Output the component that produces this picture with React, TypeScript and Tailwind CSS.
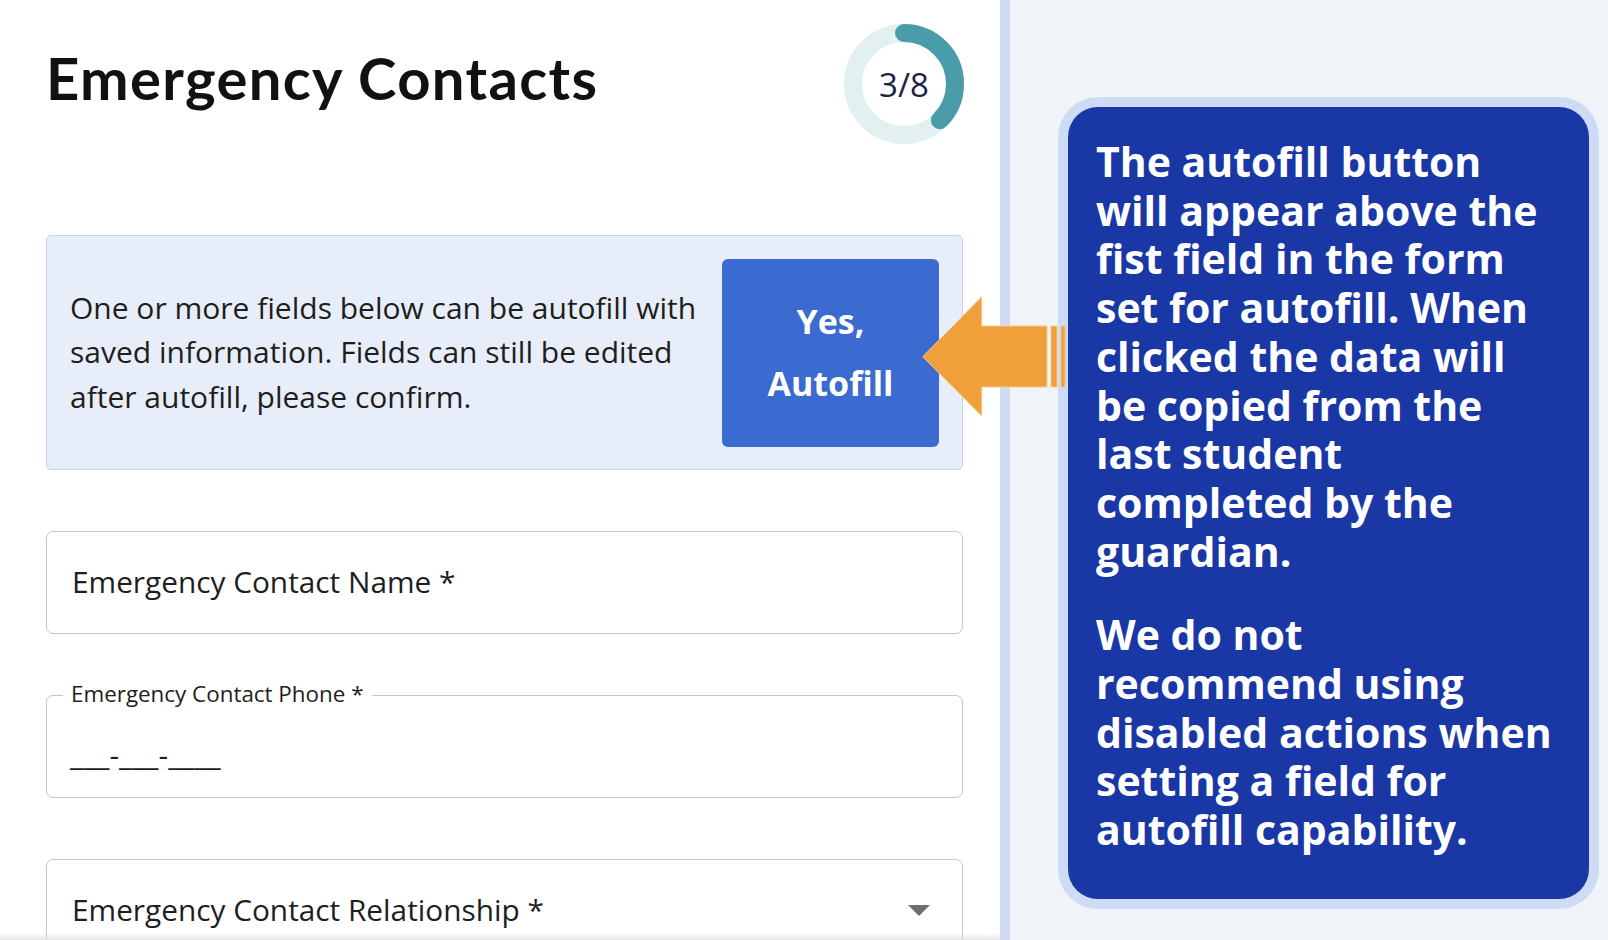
import React from "react";

const sans = { fontFamily: '"Open Sans", "Noto Sans", sans-serif' };

function ProgressRing() {
  const r = 51;
  const c = 2 * Math.PI * r;
  const p = (3 / 8) * c;
  return (
    <div className="relative h-[120px] w-[120px] shrink-0">
      <svg width="120" height="120" viewBox="0 0 120 120" className="absolute inset-0">
        <circle cx="60" cy="60" r={r} fill="none" stroke="#e3f0f2" strokeWidth="18" />
        <circle
          cx="60"
          cy="60"
          r={r}
          fill="none"
          stroke="#4a9da8"
          strokeWidth="18"
          strokeLinecap="round"
          strokeDasharray={`${p} ${c}`}
          transform="rotate(-90 60 60)"
        />
      </svg>
      <div className="absolute inset-0 flex items-center justify-center pt-[1px] text-[33px] leading-none text-[#1b2342] font-['Open_Sans',sans-serif]">
        3/8
      </div>
    </div>
  );
}

export default function App() {
  return (
    <div className="relative flex h-[940px] w-[1608px] overflow-hidden bg-white">
      {/* Left form panel */}
      <div className="relative h-[940px] w-[1000px] shrink-0 overflow-hidden bg-white pl-[46px] pr-[37px] pt-[24px] text-[#222]">
        <div className="flex items-start justify-between">
          <h1 className="mt-[25px] text-[58px] font-bold leading-[57px] tracking-[1.35px] text-[#111] font-['Lato',sans-serif]">
            Emergency Contacts
          </h1>
          <div className="mr-[-1px]">
            <ProgressRing />
          </div>
        </div>

        <div className="mt-[91px] flex h-[235px] items-center justify-between rounded-[5px] border-[1.5px] border-[#c6d3ee] bg-[#e8eef9] pl-[23px] pr-[23px] font-['Open_Sans',sans-serif]">
          <p className="whitespace-nowrap text-[30px] leading-[44.6px] text-[#1e1e1e]">
            One or more fields below can be autofill with
            <br />
            saved information. Fields can still be edited
            <br />
            after autofill, please confirm.
          </p>
          <button className="flex h-[188px] w-[217px] shrink-0 items-center justify-center rounded-[6px] bg-[#3b6ad0] text-center text-[34px] font-bold leading-[61.5px] text-white">
            <span>
              Yes,
              <br />
              Autofill
            </span>
          </button>
        </div>

        <div className="mt-[61px] flex h-[103px] items-center rounded-[7px] border-[1.5px] border-[#c6c6c6] pl-[25px] font-['Open_Sans',sans-serif] text-[29.8px] text-[#1e1e1e]">
          Emergency Contact Name *
        </div>

        <div className="relative mt-[61px] flex h-[103px] items-center rounded-[7px] border-[1.5px] border-[#c6c6c6] pl-[23px] pt-[15px] font-['Open_Sans',sans-serif] text-[#1e1e1e]">
          <span className="absolute left-[16px] top-[-2px] -translate-y-1/2 bg-white px-[8px] text-[22.4px] leading-none">
            Emergency Contact Phone *
          </span>
          <span className="text-[30px]">___-___-____</span>
        </div>

        <div className="mt-[61px] flex h-[103px] items-center justify-between rounded-[7px] border-[1.5px] border-[#c6c6c6] pl-[25px] pr-[32px] font-['Open_Sans',sans-serif] text-[29.8px] text-[#1e1e1e]">
          <span>Emergency Contact Relationship *</span>
          <svg width="22" height="11" viewBox="0 0 22 11">
            <polygon points="0,0 22,0 11,11" fill="#6e6e6e" />
          </svg>
        </div>

        <div className="pointer-events-none absolute bottom-0 left-0 right-0 h-[7px] bg-gradient-to-b from-transparent to-[#e4e4e4]" />
      </div>

      {/* Divider */}
      <div className="h-[940px] w-[10px] shrink-0 bg-[#cfdcf4]" />

      {/* Right annotation panel */}
      <div className="h-[940px] flex-1 bg-[#f0f3f8] pl-[48px] pt-[97px]">
        <div className="h-[812px] w-[541px] rounded-[40px] bg-[#cedbf5] p-[10px]">
          <div className="h-full w-full rounded-[30px] bg-[#1937a5] pl-[28px] pt-[30px] text-[41px] font-bold leading-[48.7px] text-white" style={sans}>
            <p className="whitespace-nowrap">
              The autofill button
              <br />
              will appear above the
              <br />
              fist field in the form
              <br />
              set for autofill. When
              <br />
              clicked the data will
              <br />
              be copied from the
              <br />
              last student
              <br />
              completed by the
              <br />
              guardian.
            </p>
            <p className="mt-[35px] whitespace-nowrap">
              We do not
              <br />
              recommend using
              <br />
              disabled actions when
              <br />
              setting a field for
              <br />
              autofill capability.
            </p>
          </div>
        </div>
      </div>

      {/* Orange pointer arrow overlay */}
      <svg
        className="pointer-events-none absolute left-[918px] top-[292px]"
        width="152"
        height="128"
        viewBox="918 292 152 128"
      >
        <polygon
          points="922.7,356.7 981.7,296.7 981.7,326 1047,326 1047,387 981.7,387 981.7,416"
          fill="#f0a03a"
          stroke="#f6c98c"
          strokeWidth="1"
        />
        <rect x="1051" y="326" width="6" height="61" fill="#f0a03a" stroke="#f6c98c" strokeWidth="0.8" />
        <rect x="1061" y="326" width="4" height="61" fill="#f0a03a" stroke="#f6c98c" strokeWidth="0.8" />
      </svg>
    </div>
  );
}
